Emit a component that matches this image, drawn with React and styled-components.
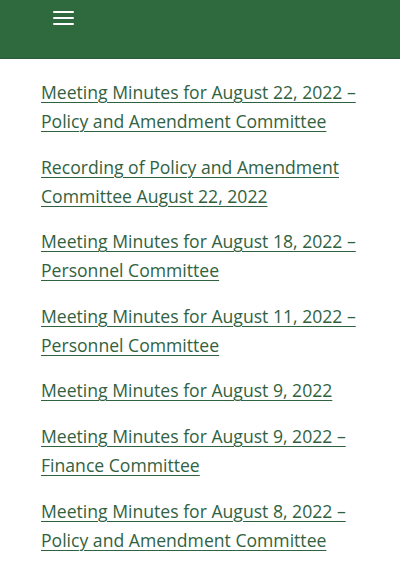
import React from "react";
import styled, { createGlobalStyle } from "styled-components";

const items = [
  "Meeting Minutes for August 22, 2022 – Policy and Amendment Committee",
  "Recording of Policy and Amendment Committee August 22, 2022",
  "Meeting Minutes for August 18, 2022 – Personnel Committee",
  "Meeting Minutes for August 11, 2022 – Personnel Committee",
  "Meeting Minutes for August 9, 2022",
  "Meeting Minutes for August 9, 2022 – Finance Committee",
  "Meeting Minutes for August 8, 2022 – Policy and Amendment Committee",
];

function App() {
  return (
    <>
      <GlobalStyle />
      <StyleHeader>
        <StyleBurger aria-label="menu">
          <span />
          <span />
          <span />
        </StyleBurger>
      </StyleHeader>
      <StyleList>
        {items.map((t) => (
          <li key={t}>
            <a href="#">{t}</a>
          </li>
        ))}
      </StyleList>
    </>
  );
}

const GlobalStyle = createGlobalStyle`
  body {
    margin: 0;
    background: #ffffff;
    font-family: "Open Sans", "Liberation Sans", sans-serif;
  }
`;

const StyleHeader = styled.header`
  height: 59px;
  background: #2f6a3e;
  border-bottom: 1px solid #28593a;
  display: flex;
  align-items: flex-start;
  padding: 11px 0 0 53px;
  box-sizing: border-box;
`;

const StyleBurger = styled.button`
  background: none;
  border: none;
  padding: 0;
  width: 21px;
  display: flex;
  flex-direction: column;
  gap: 4px;
  span {
    display: block;
    height: 2px;
    background: #ffffff;
    border-radius: 1px;
  }
`;

const StyleList = styled.ul`
  list-style: none;
  margin: 0;
  padding: 19px 34px 0 41px;
  li {
    margin-bottom: 16.6px;
  }
  a {
    font-size: 17.6px;
    line-height: 29px;
    color: #31623f;
    text-decoration: underline;
    text-underline-offset: 3px;
    text-decoration-thickness: 1px;
  }
`;

export default App;
